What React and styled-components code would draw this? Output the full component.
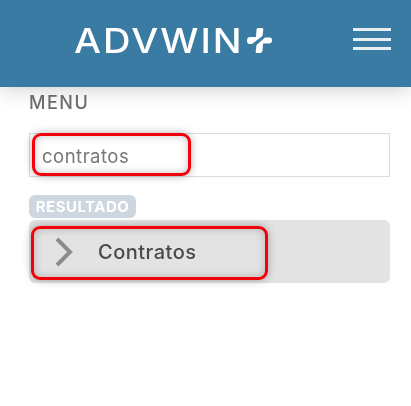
import React from 'react';
import styled, { createGlobalStyle } from 'styled-components';

const GlobalStyle = createGlobalStyle`
  html, body {
    margin: 0;
    padding: 0;
    background: #fff;
    font-family: "Inter", "Open Sans", sans-serif;
  }
`;

const Page = styled.div`
  width: 411px;
  height: 406px;
  overflow: hidden;
  filter: blur(0.5px);
`;

const Header = styled.header`
  position: relative;
  height: 87px;
  background: #397ba2;
  box-shadow: 0 2px 20px rgba(0, 0, 0, 0.2);
  display: flex;
  align-items: center;
  padding: 0 20px 0 74px;
  box-sizing: border-box;
`;

const Logo = styled.div`
  display: flex;
  align-items: center;
  flex: 1;
  margin-top: -6px;
`;

const LogoText = styled.span`
  width: 173px;
  color: #fff;
  font-size: 34px;
  line-height: 1;
  font-weight: 500;
  letter-spacing: 1.8px;
  transform: scaleX(1.12);
  transform-origin: left center;
`;

const MenuButton = styled.div`
  width: 38px;
  display: flex;
  flex-direction: column;
  gap: 6.5px;
  margin-top: -9px;
`;

const MenuLine = styled.span`
  height: 3px;
  background: #e9f0f4;
`;

const Content = styled.main`
  padding: 5px 21px 0 29px;
`;

const Title = styled.h1`
  margin: 0 0 19px;
  font-size: 18px;
  line-height: 22px;
  font-weight: 500;
  letter-spacing: 1.5px;
  color: #6f6f6f;
`;

const SearchBox = styled.div`
  position: relative;
  height: 44px;
  border: 1.5px solid #d5dde5;
  box-sizing: border-box;
  display: flex;
  align-items: center;
  padding: 1px 0 0 12px;
  font-size: 18.5px;
  letter-spacing: 0.5px;
  color: #777;
`;

const Badge = styled.div`
  width: 107px;
  height: 23px;
  margin: 18px 0 2px;
  border-radius: 6px;
  background: #ced6e0;
  color: #fff;
  font-size: 15px;
  font-weight: 700;
  letter-spacing: 0.5px;
  line-height: 23px;
  text-align: center;
`;

const ResultRow = styled.div`
  position: relative;
  height: 63px;
  border-radius: 6px;
  background: #e3e3e3;
  display: flex;
  align-items: center;
  padding-left: 26px;
  gap: 25px;
  font-size: 20px;
  font-weight: 500;
  letter-spacing: 0.5px;
  color: #4a4a4a;
`;

const Highlight = styled.span`
  position: absolute;
  left: 2px;
  top: ${(p) => p.$top}px;
  width: ${(p) => p.$width}px;
  height: ${(p) => p.$height}px;
  box-sizing: border-box;
  border: 3px solid #f5000a;
  border-radius: 9px;
  box-shadow: 0 0 8px rgba(0, 0, 0, 0.3), inset 0 0 8px rgba(0, 0, 0, 0.22);
`;

const PlusIcon = () => (
  <svg width="25" height="25" viewBox="0 0 25 25" fill="#fff">
    <path d="M9.5 1.5 Q9.5 0 11 0 H15 Q16.5 0 16.3 1.5 L15.5 8 L5 16 H2.5 Q0 16 0 12.5 Q0 9 3 9 H9 Z" />
    <path d="M18 9.5 H23 Q25 9.5 25 12.5 Q25 15.5 22 15.5 H16 L15.5 23 Q15 25 13 25 H10 Q8.5 25 8.7 23.5 L9.5 17 Z" />
  </svg>
);

const ChevronIcon = () => (
  <svg width="18" height="30" viewBox="0 0 18 30" fill="none" stroke="#8c8c8c" strokeWidth="4">
    <path d="M2 2 L15 15 L2 28" />
  </svg>
);

const App = () => (
  <Page>
    <GlobalStyle />
    <Header>
      <Logo>
        <LogoText>ADVWIN</LogoText>
        <PlusIcon />
      </Logo>
      <MenuButton>
        <MenuLine />
        <MenuLine />
        <MenuLine />
      </MenuButton>
    </Header>
    <Content>
      <Title>MENU</Title>
      <SearchBox>
        contratos
        <Highlight $top={-1} $width={159} $height={43} />
      </SearchBox>
      <Badge>RESULTADO</Badge>
      <ResultRow>
        <ChevronIcon />
        Contratos
        <Highlight $top={6} $width={237} $height={54} />
      </ResultRow>
    </Content>
  </Page>
);

export default App;
